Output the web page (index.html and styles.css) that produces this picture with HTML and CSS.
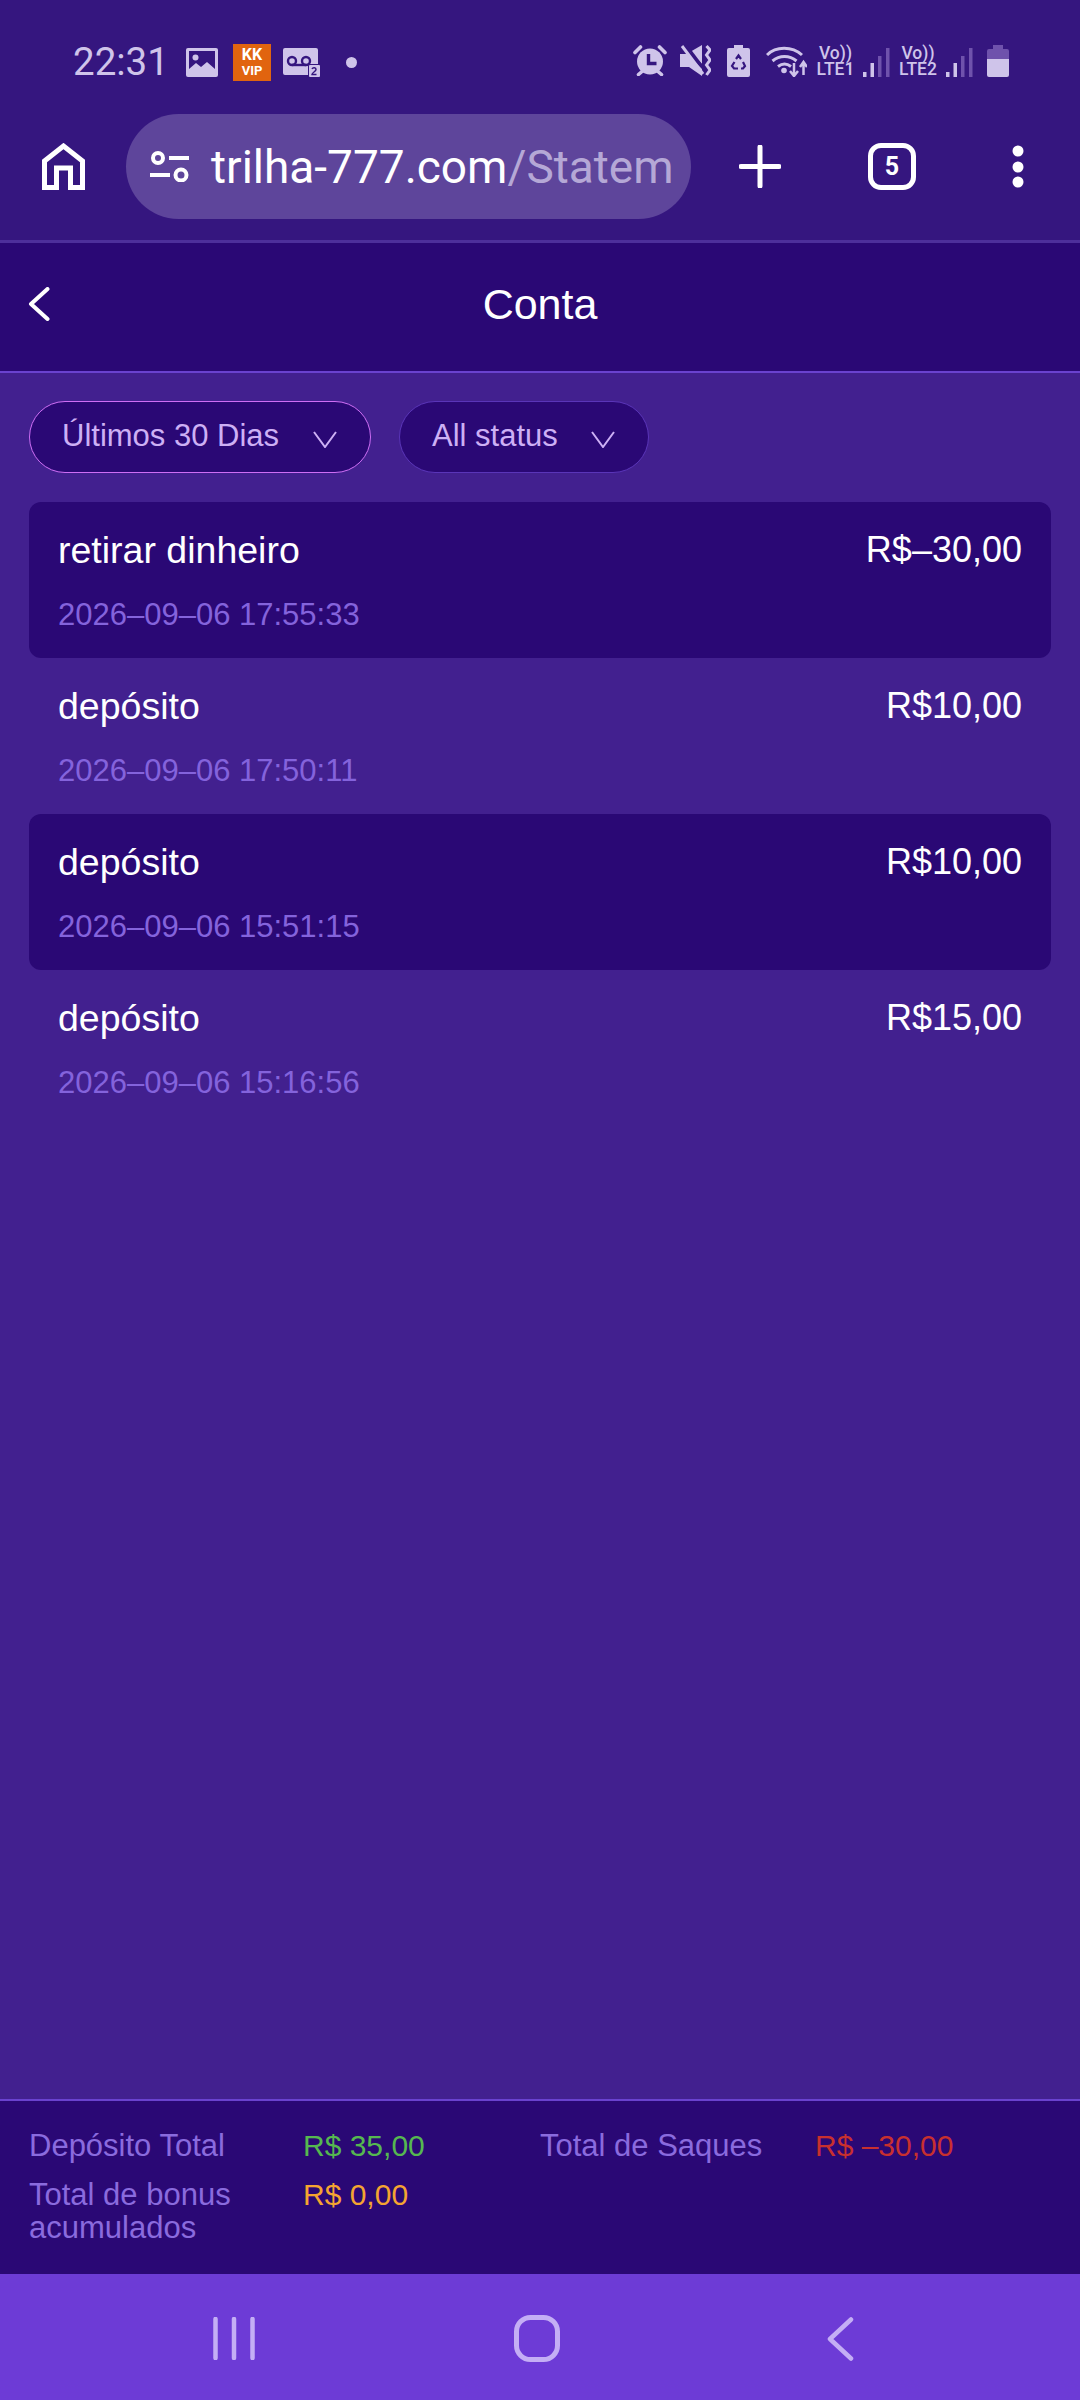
FILE: index.html
```html
<!DOCTYPE html>
<html lang="pt">
<head>
<meta charset="utf-8">
<title>Conta</title>
<link rel="stylesheet" href="styles.css">
</head>
<body>
<div class="page">
  <div class="chrome">
    <div class="status">
      <span class="clock">22:31</span>
      <svg class="si s-img" viewBox="0 0 32 29"><rect width="32" height="29" rx="2" fill="#cfc4ea"/><path d="M3 3h26v18l-8-7-6 5-5-4-7 6z" fill="#35167f"/><circle cx="9.500" cy="9.500" r="3" fill="#cfc4ea"/></svg>
      <span class="kk"><span class="kk-top">KK</span><span class="vip">VIP</span></span>
      <svg class="si s-vm" viewBox="0 0 37 29"><path d="M2 0h31a2 2 0 0 1 2 2v14h-8a2 2 0 0 0-2 2v9H2a2 2 0 0 1-2-2V2a2 2 0 0 1 2-2z" fill="#cfc4ea"/><g fill="none" stroke="#35167f" stroke-width="2.400"><circle cx="9" cy="13" r="4"/><circle cx="23" cy="13" r="4"/><path d="M9 17h14"/></g><rect x="26" y="17" width="11" height="12" rx="1" fill="#cfc4ea"/><path d="M29 21c1-2 4-1.500 4 .5s-4 3-4 5h4.500" fill="none" stroke="#35167f" stroke-width="1.500"/></svg>
      <span class="dot"></span>
      <span class="status-fill"></span>
      <svg class="si s-alarm" viewBox="0 0 34 31"><circle cx="17" cy="16.500" r="13" fill="#cfc4ea"/><path d="M2 7.500 7.500 2M32 7.500 26.500 2M5.500 29.500l3.500-3M28.500 29.500l-3.500-3" stroke="#cfc4ea" stroke-width="3.600" stroke-linecap="round"/><path d="M15.500 9v9.500h8" fill="none" stroke="#35167f" stroke-width="3.400"/></svg>
      <svg class="si s-mute" viewBox="0 0 31 31"><path d="M0 9h7l15 15v7L9 22H0z" fill="#cfc4ea"/><path d="M10 7 22 0v19z" fill="#cfc4ea"/><path d="M6 0l19 25" stroke="#35167f" stroke-width="2.400"/><path d="M2 1l21 28" stroke="#cfc4ea" stroke-width="3"/><path d="M26.500 1l3.500 4-3.500 5 3.500 5-3.500 5 3.500 5-3.500 5" fill="none" stroke="#cfc4ea" stroke-width="3"/></svg>
      <svg class="si s-save" viewBox="0 0 23 32"><path d="M7 0h9v3h5a2 2 0 0 1 2 2v25a2 2 0 0 1-2 2H2a2 2 0 0 1-2-2V5a2 2 0 0 1 2-2h5z" fill="#cfc4ea"/><path d="M9 14l2.500-3.500L14 14M7.500 17l-2.500 4 2 2.500h4M16 17l2 4-2 2.500h-2" fill="none" stroke="#35167f" stroke-width="2.200"/></svg>
      <svg class="si s-wifi" viewBox="0 0 41 32"><g fill="none" stroke="#cfc4ea" stroke-width="3"><path d="M1 10c9-9 25-9 35 0"/><path d="M6.500 16c7-6 17-6 24 0"/><path d="M12 21.500c4-3 9-3 13 0"/></g><circle cx="18" cy="25.500" r="2.800" fill="#cfc4ea"/><path d="M28 18v11M24 26l4 5 4-5M37.500 30V19M34 22l3.500-5 3.500 5" fill="none" stroke="#cfc4ea" stroke-width="2.500"/></svg>
      <span class="volte v1"><span>Vo))</span><span>LTE1</span></span>
      <svg class="si s-sig" viewBox="0 0 27 29"><g fill="#cfc4ea"><rect x="0" y="24" width="3.500" height="5"/><rect x="7.500" y="15" width="3.500" height="14"/></g><g fill="#6f52ac"><rect x="15" y="8" width="3.500" height="21"/><rect x="23" y="0" width="3.500" height="29"/></g></svg>
      <span class="volte v2"><span>Vo))</span><span>LTE2</span></span>
      <svg class="si s-sig sig2" viewBox="0 0 27 29"><g fill="#cfc4ea"><rect x="0" y="24" width="3.500" height="5"/><rect x="7.500" y="15" width="3.500" height="14"/></g><g fill="#6f52ac"><rect x="15" y="8" width="3.500" height="21"/><rect x="23" y="0" width="3.500" height="29"/></g></svg>
      <svg class="si s-bat" viewBox="0 0 22 32"><path d="M6 0h10v4h4a2 2 0 0 1 2 2v8H0V6a2 2 0 0 1 2-2h4z" fill="#6f52ac"/><path d="M0 14h22v16a2 2 0 0 1-2 2H2a2 2 0 0 1-2-2z" fill="#cfc4ea"/></svg>
    </div>
    <div class="toolbar">
      <svg class="t-home" viewBox="0 0 43 47"><path d="M2.500 44.500V18L21.500 3l19 15v26.500H28.500V25h-14v19.500z" fill="none" stroke="#fff" stroke-width="5"/></svg>
      <div class="url">
        <svg class="t-tune" viewBox="0 0 39 31"><g fill="none" stroke="#fff"><circle cx="8" cy="7" r="5" stroke-width="4"/><circle cx="31" cy="24" r="5.500" stroke-width="4"/><path d="M19 7h20M0 24h20" stroke-width="4"/></g></svg>
        <span class="url-text">trilha-777.com<span class="url-path">/Statem</span></span>
      </div>
      <svg class="t-plus" viewBox="0 0 42 43"><path d="M21 2v39M2 21.500h38" stroke="#fff" stroke-width="5" stroke-linecap="round"/></svg>
      <span class="tabs">5</span>
      <svg class="t-menu" viewBox="0 0 12 43"><circle cx="6" cy="6" r="5.500" fill="#fff"/><circle cx="6" cy="22" r="5.500" fill="#fff"/><circle cx="6" cy="37" r="5.500" fill="#fff"/></svg>
    </div>
  </div>

  <header class="head">
    <svg class="back" viewBox="0 0 22 34"><path d="M19.500 2 3 17l16.500 15" fill="none" stroke="#fff" stroke-width="4" stroke-linecap="round" stroke-linejoin="round"/></svg>
    <h1 class="head-title">Conta</h1>
  </header>

  <main class="main">
    <div class="filters">
      <div class="pill pill-on"><span>Últimos 30 Dias</span><svg class="chev" viewBox="0 0 24 17"><path d="M1 1l11 15L23 1" fill="none" stroke="#cdb0f5" stroke-width="2"/></svg></div>
      <div class="pill pill-off"><span>All status</span><svg class="chev" viewBox="0 0 24 17"><path d="M1 1l11 15L23 1" fill="none" stroke="#cdb0f5" stroke-width="2"/></svg></div>
    </div>
    <div class="list">
      <div class="row row-dark"><div class="line"><span class="kind">retirar dinheiro</span><span>R$–30,00</span></div><div class="date">2026–09–06 17:55:33</div></div>
      <div class="row"><div class="line"><span class="kind">depósito</span><span>R$10,00</span></div><div class="date">2026–09–06 17:50:11</div></div>
      <div class="row row-dark"><div class="line"><span class="kind">depósito</span><span>R$10,00</span></div><div class="date">2026–09–06 15:51:15</div></div>
      <div class="row"><div class="line"><span class="kind">depósito</span><span>R$15,00</span></div><div class="date">2026–09–06 15:16:56</div></div>
    </div>
  </main>

  <footer class="totals">
    <div class="t-label">Depósito Total</div>
    <div class="t-val green">R$ 35,00</div>
    <div class="t-label">Total de Saques</div>
    <div class="t-val red">R$ –30,00</div>
    <div class="t-label">Total de bonus acumulados</div>
    <div class="t-val amber">R$ 0,00</div>
  </footer>

  <nav class="navbar">
    <svg class="n-bars" viewBox="0 0 42 43"><path d="M2.500 2v39M21 2v39M39.500 2v39" stroke="#c4aef5" stroke-width="4.500" stroke-linecap="round"/></svg>
    <svg class="n-home" viewBox="0 0 46 47"><rect x="2.500" y="2.500" width="41" height="42" rx="14" fill="none" stroke="#c4aef5" stroke-width="5"/></svg>
    <svg class="n-back" viewBox="0 0 27 44"><path d="M24 2.500 3 22l21 19.500" fill="none" stroke="#c4aef5" stroke-width="4.500" stroke-linecap="round" stroke-linejoin="round"/></svg>
  </nav>
</div>
</body>
</html>
```

FILE: styles.css
```css
* { box-sizing: border-box; }
html, body { margin: 0; padding: 0; }
body { width: 1080px; height: 2400px; background: #42208f; font-family: "Liberation Sans", Arial, sans-serif; }
.page { width: 1080px; height: 2400px; display: flex; flex-direction: column; overflow: hidden; }

.chrome { height: 243px; flex: none; background: #35167f; border-bottom: 3px solid #4d2f9b; }
.status { height: 108px; padding: 45px 71px 0 73px; display: flex; align-items: flex-start; color: #cfc4ea; }
.clock { font: 400 38.500px/34px Roboto, sans-serif; width: 113px; flex: none; }
.si { display: block; flex: none; }
.s-img { width: 32px; height: 29px; margin-top: 3px; }
.kk { width: 38px; height: 37px; margin: -1px 0 0 15px; flex: none; background: #e1640f; color: #fff; display: flex; flex-direction: column; align-items: center; font: 700 15px/17px Roboto, sans-serif; padding-top: 2px; }
.kk-top { font-size: 16px; }
.vip { font-size: 13px; line-height: 15px; }
.s-vm { width: 37px; height: 29px; margin: 3px 0 0 12px; }
.dot { width: 11px; height: 11px; border-radius: 50%; background: #cfc4ea; margin: 12px 0 0 26px; flex: none; }
.status-fill { flex: 1; }
.s-alarm { width: 34px; height: 31px; }
.s-mute { width: 31px; height: 31px; margin-left: 13px; }
.s-save { width: 23px; height: 32px; margin-left: 16px; }
.s-wifi { width: 41px; height: 32px; margin-left: 16px; }
.volte { display: flex; flex-direction: column; align-items: center; margin-left: 9px; font: 500 17.500px/16px Roboto, sans-serif; width: 39px; flex: none; }
.v2 { margin-left: 8px; width: 40px; }
.s-sig { width: 27px; height: 29px; margin: 3px 0 0 8px; }
.sig2 { margin-left: 8px; }
.s-bat { width: 22px; height: 32px; margin-left: 14px; }

.toolbar { height: 132px; padding: 0 0 15px 42px; display: flex; align-items: center; }
.t-home { width: 43px; height: 47px; flex: none; }
.url { width: 565px; height: 105px; margin-left: 41px; padding-left: 24px; flex: none; background: #5e459b; border-radius: 53px; display: flex; align-items: center; overflow: hidden; }
.t-tune { width: 39px; height: 31px; flex: none; }
.url-text { margin-left: 22px; font: 400 46px/50px Roboto, sans-serif; color: #fff; white-space: nowrap; }
.url-path { color: #b5a8d6; }
.t-plus { width: 42px; height: 43px; margin-left: 48px; flex: none; }
.tabs { width: 48px; height: 47px; margin-left: 87px; flex: none; border: 5px solid #fff; border-radius: 13px; color: #fff; font: 700 25px/37px Roboto, sans-serif; text-align: center; }
.t-menu { width: 12px; height: 43px; margin-left: 96px; flex: none; }

.head { height: 130px; flex: none; background: #2a0875; border-bottom: 2px solid #6a42cf; display: flex; align-items: center; justify-content: center; position: relative; }
.back { position: absolute; left: 28px; top: 44px; width: 22px; height: 34px; }
.head-title { margin: 0 0 6px; font-size: 43px; line-height: 50px; font-weight: 400; color: #fff; }

.main { flex: 1; min-height: 0; padding: 28px 29px 0; }
.filters { display: flex; gap: 28px; }
.pill { height: 72px; display: flex; align-items: center; justify-content: space-between; background: #2a0875; border-radius: 36px; color: #cdb0f5; font-size: 31px; padding: 0 33px 0 32px; white-space: nowrap; }
.pill span { margin-bottom: 3px; }
.pill-on { width: 342px; border: 1.500px solid #cf6ef5; }
.pill-off { width: 250px; border: 1.500px solid #5a35b8; }
.chev { width: 24px; height: 17px; margin-top: 5px; }
.list { margin-top: 29px; }
.row { height: 156px; padding: 0 29px; border-radius: 12px; }
.row-dark { background: #2a0875; }
.line { display: flex; justify-content: space-between; padding-top: 26px; font-size: 36px; line-height: 44px; color: #fff; }
.kind { font-size: 37.500px; }
.date { margin-top: 25px; font-size: 31px; line-height: 36px; color: #8463dc; }

.totals { flex: none; height: 175px; border-top: 2px solid #6a42cf; background: #2a0875; padding: 29px 0 0 29px; display: grid; grid-template-columns: 274px 237px 275px 1fr; grid-template-rows: 49px 66px; font-size: 31px; line-height: 32.500px; align-items: start; }
.t-label { color: #8a6bde; }
.t-label:nth-of-type(5) { width: 250px; }
.t-val { font-size: 30px; }
.green { color: #56b850; }
.red { color: #c8302f; }
.amber { color: #f5a431; }

.navbar { flex: none; height: 126px; background: #6d3bd6; padding: 41px 0 0 213px; display: flex; align-items: flex-start; }
.n-bars { width: 42px; height: 43px; flex: none; margin-top: 2px; }
.n-home { width: 46px; height: 47px; flex: none; margin-left: 259px; }
.n-back { width: 27px; height: 44px; flex: none; margin: 2px 0 0 267px; }
```
